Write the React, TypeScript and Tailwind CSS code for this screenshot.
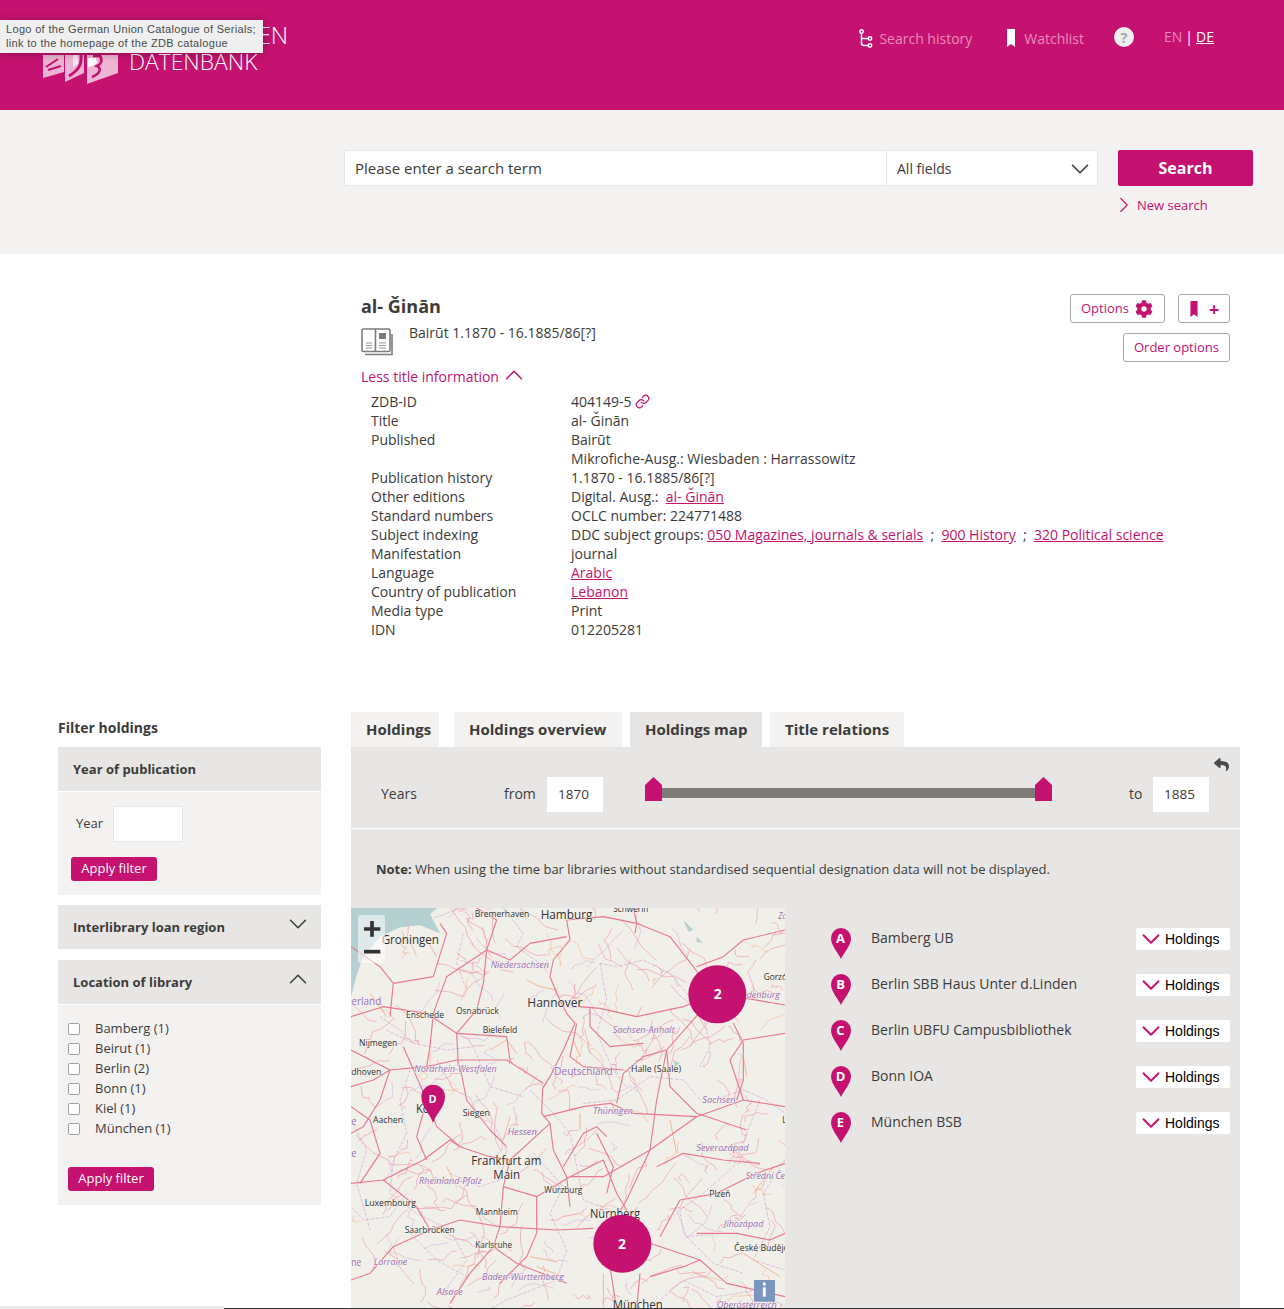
import { ChevronDown, ChevronRight, ChevronUp, Link as LinkIcon } from "lucide-react";
import { FaCog, FaReply } from "react-icons/fa";

const motorways = [
  "M650 60L660 120 610 180 600 230 625 290 650 340 675 370 640 450 600 530 578 565 575 640 600 670 610 750 650 830 660 920",
  "M650 60L760 50 860 70 960 110 1030 200 1060 240",
  "M650 110L540 130 480 180 410 150 400 250 380 330 320 400 325 500",
  "M410 150L440 60 380 24",
  "M690 320L750 325 860 350 1000 320 1100 280 1305 315",
  "M1100 280L950 450 920 600 900 750 830 900 800 950",
  "M3 450L120 510 230 500 320 480 470 480 580 550",
  "M3 350L100 320 230 340 320 400 470 410 480 480",
  "M230 500L240 440 250 340 290 230 410 150",
  "M120 510L90 600 40 680 3 700",
  "M230 600L260 680 330 740 420 770 480 780 600 670",
  "M330 500L350 600 420 690 470 740",
  "M480 780L460 860 450 980 430 1040 500 1090 650 1150",
  "M460 860L560 890 660 830 760 780 800 880 830 930",
  "M660 830L760 830 900 750 1040 650 1180 600 1305 620",
  "M580 650L700 620 780 610 850 640 1040 650",
  "M800 610L820 520 880 470 950 450",
  "M3 850L100 840 220 780 300 720 330 740",
  "M100 840L200 920 240 990 330 960 450 980 620 990 730 985",
  "M240 990L130 1040 60 1120 3 1140",
  "M430 1040L360 1120 300 1210",
  "M800 1000L780 1100 800 1227",
  "M900 1030L1050 1080 1130 1150 1305 1190",
  "M870 1120L860 1227",
  "M900 1130L1000 1100 1050 1080",
  "M930 1010L990 900 1100 880 1220 820 1305 790",
  "M1180 600L1140 480 1180 420 1305 400",
  "M1150 370L1180 430 1180 540 1160 600",
  "M950 450L960 560 1040 640 1190 690",
  "M860 70L850 24M860 70L855 100",
  "M1040 200L1120 170 1180 120 1305 90",
  "M720 320L720 380 780 440 880 430",
  "M680 370L660 470 700 500 820 510",
  "M3 140L90 200 130 250 120 350",
  "M130 250L250 230M250 230L290 100 270 70",
  "M740 700L790 800 770 880",
  "M640 800L700 700 740 680 770 710",
  "M560 890L560 1000 530 1070 450 1150",
  "M3 560L70 540 120 510",
  "M160 440L230 600 200 710 230 780",
  "M3 620L60 660 90 760 30 850",
  "M920 800L1000 760 1120 780 1230 790",
  "M1040 1000L1160 1000 1260 1020 1305 1000",
];

const orangeRoads = [
  "M530 240L570 260 620 270",
  "M320 160L350 180",
  "M420 450L470 420 500 460",
  "M690 640L690 690",
  "M540 1070L620 1085",
  "M560 1100L640 1130",
  "M760 1120L760 1210",
  "M1210 880L1270 800",
  "M1180 1060L1290 1130",
  "M670 420L690 470",
  "M480 650L460 720",
  "M780 600L800 640",
  "M960 660L980 760",
  "M60 280L110 350",
  "M290 800L320 860",
  "M1180 470L1190 530",
  "M860 350L875 320",
  "M230 120L260 170",
];

const borders = [
  "M170 880L120 950 40 960 3 920",
  "M180 510L150 600 170 700 130 780 120 880 200 940 300 990 350 1080 280 1180",
  "M350 640L430 670 470 750 450 840 390 860 300 820",
  "M540 570L610 640 660 700 700 900 780 930",
  "M750 190L800 200 880 180 960 220 1010 280 1060 350 1080 440 1050 500",
  "M750 190L770 300 740 400 790 510 830 560",
  "M700 610L800 600 900 530 1000 540 1060 610 1180 570 1250 600 1305 640",
  "M1230 600L1190 700 1150 800 1060 880 990 930 1000 1000 1090 1090 1180 1120",
  "M1305 780L1240 880 1260 980 1210 1080 1305 1110",
  "M110 390L190 430 290 450 370 440 420 560 520 590",
  "M3 660L50 750 20 850 60 990",
  "M550 760L640 860 600 940 650 1050 620 1140 470 1200 420 1227",
  "M180 1000L260 1080 350 1130",
  "M900 1227L1000 1140 1100 1190 1220 1170 1305 1220",
  "M460 24L520 100 500 140 570 190",
  "M340 100L320 190 350 270",
  "M90 350L150 390 190 430",
  "M1120 1000L1010 1010 980 930",
];

// small roads all over the map, only there as texture
function minorRoads(count: number, seed: number, reach: number) {
  let s = seed;
  const next = (n: number) => {
    s = (s * 1103515245 + 12345) % 2147483648;
    return (s / 2147483648) * n;
  };
  const out: string[] = [];
  for (let i = 0; i < count; i++) {
    let x = next(1302) + 3;
    let y = next(1203) + 24;
    if (x + y < 300) continue;
    let d = `M${x.toFixed(0)} ${y.toFixed(0)}`;
    const dirX = next(2) - 1;
    const dirY = next(2) - 1;
    for (let j = 0; j < 5; j++) {
      x += dirX * reach + next(30) - 15;
      y += dirY * reach + next(30) - 15;
      d += `L${x.toFixed(0)} ${y.toFixed(0)}`;
    }
    out.push(d);
  }
  return out;
}

const pinkTexture = minorRoads(190, 11, 24);
const orangeTexture = minorRoads(40, 77, 18);
const purpleTexture = minorRoads(60, 205, 20);

const mapLabels: [string, number, number, number, number, string][] = [
  ["Bremerhaven", 374, 52, 28, 164, "city"],
  ["Hamburg", 572, 56, 38, 155, "city"],
  ["Schwerin", 790, 35, 28, 105, "city"],
  ["Groningen", 95, 132, 37, 172, "city"],
  ["Niedersachsen", 422, 203, 28, 175, "state"],
  ["erland", 4, 314, 31, 90, "country"],
  ["Gorzó", 1241, 240, 28, 70, "city"],
  ["denburg", 1190, 295, 28, 100, "state"],
  ["Za", 1285, 58, 28, 26, "state"],
  ["Hannover", 532, 322, 37, 165, "city"],
  ["Enschede", 168, 353, 28, 114, "city"],
  ["Osnabrück", 318, 343, 28, 128, "city"],
  ["Bielefeld", 398, 400, 28, 104, "city"],
  ["Sachsen-Anhalt", 788, 398, 28, 186, "state"],
  ["Nijmegen", 27, 437, 28, 115, "city"],
  ["dhoven", 4, 526, 28, 90, "city"],
  ["Nordrhein-Westfalen", 193, 515, 28, 247, "state"],
  ["Deutschland", 613, 526, 32, 175, "country"],
  ["Halle (Saale)", 843, 516, 28, 150, "city"],
  ["Köln", 198, 640, 37, 70, "city"],
  ["Sachsen", 1057, 610, 28, 100, "state"],
  ["Siegen", 338, 648, 28, 82, "city"],
  ["Aachen", 69, 670, 28, 90, "city"],
  ["e", 4, 676, 31, 16, "country"],
  ["Thüringen", 729, 643, 28, 120, "state"],
  ["Hessen", 473, 706, 28, 88, "state"],
  ["L", 1297, 670, 28, 12, "city"],
  ["Severozápad", 1039, 752, 28, 157, "state"],
  ["e", 4, 772, 31, 16, "country"],
  ["Frankfurt am", 364, 796, 37, 210, "city"],
  ["Main", 430, 838, 37, 80, "city"],
  ["Rheinland-Pfalz", 207, 853, 28, 188, "state"],
  ["Střední Če", 1187, 836, 28, 118, "state"],
  ["Würzburg", 583, 880, 28, 114, "city"],
  ["Plzeň", 1078, 890, 28, 63, "city"],
  ["Luxembourg", 44, 918, 28, 154, "city"],
  ["Mannheim", 377, 944, 28, 126, "city"],
  ["Nürnberg", 720, 955, 37, 150, "city"],
  ["Saarbrücken", 164, 998, 28, 150, "city"],
  ["Jihozápad", 1122, 980, 28, 118, "state"],
  ["Karlsruhe", 376, 1043, 28, 110, "city"],
  ["České Budějovice", 1153, 1052, 28, 210, "city"],
  ["ne", 4, 1098, 31, 30, "country"],
  ["Lorraine", 72, 1094, 28, 100, "state"],
  ["Baden-Württemberg", 396, 1140, 28, 245, "state"],
  ["Alsace", 260, 1184, 28, 78, "state"],
  ["München", 788, 1226, 37, 150, "city"],
  ["Oberösterreich", 1100, 1224, 28, 180, "state"],
];

const info: [string, React.ReactNode][] = [
  ["ZDB-ID", <span className="flex items-center gap-[3px]">404149-5 <LinkIcon size={15} className="text-[#c5116f]" /></span>],
  ["Title", "al- Ǧinān"],
  ["Published", "Bairūt"],
  ["", "Mikrofiche-Ausg.: Wiesbaden : Harrassowitz"],
  ["Publication history", "1.1870 - 16.1885/86[?]"],
  ["Other editions", <>Digital. Ausg.:&nbsp; <a className="text-[#c5116f] underline">al- Ǧinān</a></>],
  ["Standard numbers", "OCLC number: 224771488"],
  ["Subject indexing", <>DDC subject groups: <a className="text-[#c5116f] underline">050 Magazines, journals &amp; serials</a>&nbsp; ;&nbsp; <a className="text-[#c5116f] underline">900 History</a>&nbsp; ;&nbsp; <a className="text-[#c5116f] underline">320 Political science</a></>],
  ["Manifestation", "journal"],
  ["Language", <a className="text-[#c5116f] underline">Arabic</a>],
  ["Country of publication", <a className="text-[#c5116f] underline">Lebanon</a>],
  ["Media type", "Print"],
  ["IDN", "012205281"],
];

const libraries = [
  ["A", "Bamberg UB"],
  ["B", "Berlin SBB Haus Unter d.Linden"],
  ["C", "Berlin UBFU Campusbibliothek"],
  ["D", "Bonn IOA"],
  ["E", "München BSB"],
];

const locations = ["Bamberg (1)", "Beirut (1)", "Berlin (2)", "Bonn (1)", "Kiel (1)", "München (1)"];

function Pin({ letter }: { letter: string }) {
  return (
    <svg width="20" height="31" viewBox="0 0 20 31" className="shrink-0">
      <path d="M10 31C7 24 0 18 0 10A10 10 0 0 1 20 10C20 18 13 24 10 31Z" fill="#c5116f" />
      <text x="9.5" y="14.5" textAnchor="middle" fontSize="13" fontWeight="700" fill="#fff" fontFamily="Open Sans, sans-serif">
        {letter}
      </text>
    </svg>
  );
}

function Bookmark({ className }: { className: string }) {
  return (
    <svg width="8" height="18" viewBox="0 0 8 18" fill="currentColor" className={className}>
      <path d="M0 0H8V18L4 15 0 18Z" />
    </svg>
  );
}

function Logo() {
  return (
    <div className="flex items-end gap-[11px]">
      <svg width="75" height="30" viewBox="0 0 75 30" className="mb-[-5px] overflow-visible">
        <path d="M0 0H21V17L0 23Z" fill="#eeb4d3" />
        <path d="M22 0H41V18L22 27Z" fill="#eeb4d3" />
        <path d="M44 0H75V18L44 29Z" fill="#eeb4d3" />
        <path d="M3 12L15 4M5 15L18 11" stroke="#c5116f" strokeWidth="2" fill="none" />
        <path d="M30 0H35V9L30 12Z" fill="#f9e6f0" />
        <path d="M38 0C39 9 36 15 26 21" stroke="#c5116f" strokeWidth="3" fill="none" />
        <path d="M45 3H53L54 8 50 11 45 12Z" fill="#fff" />
        <path d="M50 1H57C60 6 58 9 54 11C59 13 57 19 49 22" stroke="#c5116f" strokeWidth="2.6" fill="none" />
      </svg>
      <span className="text-[22.8px] leading-[30px] font-light text-white relative top-[-3px]">DATENBANK</span>
    </div>
  );
}

function Header() {
  return (
    <header className="relative h-[110px] bg-[#c5116f] flex justify-between text-white">
      <div className="pl-[43px] pt-[17px]">
        <div className="text-[24px] leading-[36px] font-light text-right w-[245px] mb-[-3px]">ZEITSCHRIFTEN</div>
        <Logo />
      </div>
      <nav className="flex items-start pt-[26px] pr-[70px] text-sm">
        <svg width="14" height="20" viewBox="0 0 14 20" className="mt-[3px] mr-[6px]" fill="none" stroke="#fff" strokeWidth="1.5">
          <circle cx="2.5" cy="2.5" r="1.7" />
          <circle cx="11" cy="9.5" r="1.7" />
          <circle cx="11" cy="16.5" r="1.7" />
          <path d="M2.5 4.5V14C2.5 16 3.5 16.5 5 16.5H9M2.5 9.5H9" />
        </svg>
        <span className="text-[#e78cbc] leading-[26px] mr-[35px]">Search history</span>
        <Bookmark className="mt-[3px] mr-[9px] text-white" />
        <span className="text-[#e78cbc] leading-[26px] mr-[30px]">Watchlist</span>
        <span className="w-5 h-5 mt-[1px] mr-[30px] rounded-full bg-[#f0eff0] text-[#a9a9ad] font-bold text-[15px] leading-5 text-center">?</span>
        <span className="leading-[22px] text-[#e78cbc]">EN</span>
        <span className="leading-[22px] mx-[3px]">|</span>
        <span className="leading-[22px] underline">DE</span>
      </nav>
      <div className="absolute left-0 top-[20px] w-[263px] h-[33px] bg-[#efefef] shadow-[0_1px_8px_rgba(0,0,0,0.3)] px-[6px] pt-[2px] text-[11px] leading-[14px] text-[#4a4a4a] font-['Liberation_Sans',sans-serif] tracking-[0.33px] whitespace-nowrap">
        Logo of the German Union Catalogue of Serials;
        <br />
        link to the homepage of the ZDB catalogue
      </div>
    </header>
  );
}

function SearchBand() {
  return (
    <section className="h-[144px] bg-[#f3f2f1] pl-[344px] pt-[40px] flex items-start">
      <div className="flex w-[754px] h-[36px] bg-white border border-[#e7e6e4] text-[15px] leading-[34px]">
        <div className="w-[541px] pl-[10px]">Please enter a search term</div>
        <div className="flex-1 border-l border-[#e7e6e4] pl-[10px] pr-[2px] flex items-center justify-between text-sm pt-[1px]">
          All fields
          <ChevronDown size={30} className="text-[#3c3b3a]" strokeWidth={1.3} />
        </div>
      </div>
      <div className="ml-[20px]">
        <button className="w-[135px] h-[36px] bg-[#c5116f] rounded-[2px] text-white font-bold text-base">Search</button>
        <div className="flex items-center ml-[-7px] mt-[10px] text-[13px] leading-[18px] text-[#c5116f]">
          <ChevronRight size={26} strokeWidth={1} className="my-[-4px]" />
          New search
        </div>
      </div>
    </section>
  );
}

function TitleSection() {
  return (
    <section className="h-[458px] pl-[361px] pr-[54px] pt-[40px] flex">
      <div className="w-0 grow">
        <h1 className="text-lg leading-[26px] font-bold mt-[-1px]">al- Ǧinān</h1>
        <div className="flex mt-[6px]">
          <svg width="32" height="28" viewBox="0 0 32 28" fill="none" className="mt-[3px]">
            <rect x="1" y="1" width="28" height="22.5" rx="1.5" fill="#fff" stroke="#7f7a78" strokeWidth="1.6" />
            <path d="M14.5 1V23M31 6V26.5H4" stroke="#7f7a78" strokeWidth="1.6" />
            <rect x="18" y="5" width="7" height="6" fill="#7f7a78" />
            <path d="M5 15H11M5 17.5H11M5 20H11M18 15H25M18 17.5H25M18 20H25" stroke="#7f7a78" strokeWidth="0.8" />
          </svg>
          <div className="ml-[16px] text-sm leading-[20px] mt-[-2px]">Bairūt 1.1870 - 16.1885/86[?]</div>
        </div>
        <div className="flex items-start h-[20px] mt-[11px] text-sm leading-[20px] text-[#c5116f]">
          Less title information
          <ChevronUp size={30} strokeWidth={1.2} className="mt-[-7px]" />
        </div>
        <dl className="grid grid-cols-[200px_1fr] pl-[10px] mt-[5px] text-sm leading-[19px]">
          {info.map(([label, value], i) => (
            <div key={i} className="contents">
              <dt>{label}</dt>
              <dd className="whitespace-nowrap">{value}</dd>
            </div>
          ))}
        </dl>
      </div>
      <div className="flex flex-col items-end gap-[10px] text-[13px] text-[#c5116f]">
        <div className="flex gap-[13px]">
          <div className="flex items-center h-[29px] w-[95px] pl-[10px] gap-[6px] border border-[#a9a6a5] rounded-[3px] bg-white">
            Options
            <FaCog size={18} />
          </div>
          <div className="flex items-center h-[29px] w-[52px] pl-[11px] gap-[11px] border border-[#a9a6a5] rounded-[3px] bg-white">
            <Bookmark className="h-[16px]" />
            <span className="font-bold text-lg leading-none">+</span>
          </div>
        </div>
        <div className="flex items-center justify-center h-[29px] w-[107px] border border-[#a9a6a5] rounded-[3px] bg-white">
          Order options
        </div>
      </div>
    </section>
  );
}

function ApplyButton() {
  return <button className="block w-[86px] h-[24px] bg-[#c5116f] rounded-[3px] text-white text-[13px]">Apply filter</button>;
}

function FilterHead({ title, icon }: { title: string; icon?: React.ReactNode }) {
  return (
    <div className="h-[44px] bg-[#e7e6e4] pl-[15px] pr-[8px] pt-[1px] flex justify-between items-center text-[13px] font-bold">
      {title}
      {icon}
    </div>
  );
}

function Filters() {
  return (
    <aside className="w-[263px] ml-[58px]">
      <h2 className="text-sm font-bold leading-[20px] pt-[6px] h-[35px]">Filter holdings</h2>
      <FilterHead title="Year of publication" />
      <div className="mt-[1px] h-[103px] bg-[#f3f2f1] pl-[13px] pt-[14px]">
        <div className="flex items-center pl-[5px] text-[13px] gap-[10px]">
          Year
          <div className="w-[70px] h-[36px] bg-white border border-[#e7e6e4]" />
        </div>
        <div className="mt-[15px]">
          <ApplyButton />
        </div>
      </div>
      <div className="mt-[10px]">
        <FilterHead title="Interlibrary loan region" icon={<ChevronDown size={30} strokeWidth={1.2} className="mb-[-8px] mt-[-16px]" />} />
      </div>
      <div className="mt-[11px]">
        <FilterHead title="Location of library" icon={<ChevronUp size={30} strokeWidth={1.2} className="mb-[-8px] mt-[-16px]" />} />
      </div>
      <div className="mt-[1px] h-[200px] bg-[#f3f2f1] pl-[10px] pt-[14px]">
        {locations.map((l) => (
          <div key={l} className="flex items-center h-[20px] text-[13px]">
            <span className="w-[12px] h-[12px] border border-[#a0a0a0] rounded-[2px] bg-white mr-[15px]" />
            {l}
          </div>
        ))}
        <div className="mt-[28px]">
          <ApplyButton />
        </div>
      </div>
    </aside>
  );
}

function Tabs() {
  return (
    <div className="flex h-[35px] text-[15px] font-bold">
      <div className="w-[88px] bg-[#f3f2f1] flex items-center pl-[15px]">Holdings</div>
      <div className="w-[168px] ml-[15px] bg-[#f3f2f1] flex items-center pl-[15px]">Holdings overview</div>
      <div className="w-[132px] ml-[8px] bg-[#e7e6e4] flex items-center pl-[15px]">Holdings map</div>
      <div className="w-[134px] ml-[8px] bg-[#f3f2f1] flex items-center pl-[15px]">Title relations</div>
    </div>
  );
}

function Thumb({ className }: { className: string }) {
  return (
    <svg width="17" height="24" viewBox="0 0 17 24" className={"absolute top-[-11px] " + className}>
      <path d="M0 8L8.5 0 17 8V24H0Z" fill="#c5116f" />
    </svg>
  );
}

function YearSlider() {
  return (
    <div className="relative h-[82px] pt-[14px] border-b border-white flex items-center pl-[30px] text-sm">
      <span className="w-[123px] mt-[-2px]">Years</span>
      <span className="w-[43px] mt-[-2px]">from</span>
      <div className="w-[56px] h-[35px] bg-white leading-[35px] pl-[11px] text-[13.5px]">1870</div>
      <div className="relative w-[406px] h-[10px] ml-[43px] mb-[4px] bg-[#7f7a78]">
        <Thumb className="left-[-1px]" />
        <Thumb className="right-0" />
      </div>
      <span className="ml-[77px] w-[24px] mt-[-2px]">to</span>
      <div className="w-[56px] h-[35px] bg-white leading-[35px] pl-[11px] text-[13.5px]">1885</div>
      <FaReply size={15} className="absolute right-[11px] top-[10px] text-[#4a4a4a]" />
    </div>
  );
}

function HoldingsMap() {
  return (
    <div className="relative w-[434px] h-[401px] shrink-0 overflow-hidden bg-[#f1efe9]">
      <svg width="434" height="401" viewBox="3 24 1302 1203" className="block">
        <path d="M3 24H262L240 42 270 100 210 76 150 82 90 110 40 170 20 225 3 290Z" fill="#b5d0d0" />
        <path d="M1000 60L1030 90 1015 95ZM1040 110L1060 130 1040 125ZM970 480L990 490 975 500Z" fill="#b5d0d0" />
        <g fill="none" strokeLinejoin="round">
          {purpleTexture.map((d) => (
            <path key={d} d={d} stroke="#dcbde0" strokeWidth="2.2" />
          ))}
          {borders.map((d) => (
            <path key={d} d={d} stroke="#cfa6d6" strokeWidth="2.4" strokeDasharray="7 3 2 3" />
          ))}
          {orangeTexture.map((d) => (
            <path key={d} d={d} stroke="#f6bd9c" strokeWidth="2" />
          ))}
          {orangeRoads.map((d) => (
            <path key={d} d={d} stroke="#f4a77c" strokeWidth="2.4" />
          ))}
          {pinkTexture.map((d) => (
            <path key={d} d={d} stroke="#eda3b1" strokeWidth="2.2" />
          ))}
          {motorways.map((d) => (
            <path key={d} d={d} stroke="#e8798f" strokeWidth="3.4" />
          ))}
        </g>
        <g fontFamily="Open Sans, sans-serif" paintOrder="stroke" stroke="#f4f3ee" strokeWidth="3">
          {mapLabels.map(([text, x, y, size, width, kind]) => (
            <text
              key={text + y}
              x={x}
              y={y}
              fontSize={size}
              textLength={width}
              lengthAdjust="spacingAndGlyphs"
              fill={kind === "city" ? "#303030" : "#9a6fb0"}
              fontStyle={kind === "state" ? "italic" : "normal"}
            >
              {text}
            </text>
          ))}
        </g>
        <circle cx="1102" cy="283" r="87" fill="#c5116f" />
        <circle cx="817" cy="1031" r="87" fill="#c5116f" />
        <g fontFamily="Open Sans, sans-serif" fontWeight="700" fontSize="42" fill="#fff" textAnchor="middle">
          <text x="1103" y="298">2</text>
          <text x="816" y="1046">2</text>
        </g>
        <path d="M249 668C240 640 214 622 214 590A35 35 0 0 1 285 590C285 622 258 640 249 668Z" fill="#c5116f" />
        <text x="248" y="610" fontFamily="Open Sans, sans-serif" fontWeight="700" fontSize="33" fill="#fff" textAnchor="middle">D</text>
        <rect x="24" y="45" width="81" height="145" rx="10" fill="#fff" fillOpacity="0.55" />
        <path d="M42 87H91M66 63V110" stroke="#333" strokeWidth="11" />
        <path d="M42 155H91" stroke="#333" strokeWidth="11" />
        <rect x="1212" y="1140" width="63" height="65" rx="3" fill="#7a96bf" />
        <path d="M1243 1162V1190" stroke="#fff" strokeWidth="9" />
        <circle cx="1243" cy="1152" r="5" fill="#fff" />
      </svg>
    </div>
  );
}

function LibraryList() {
  return (
    <ul className="ml-[46px] w-[399px] pt-[20px]">
      {libraries.map(([letter, name]) => (
        <li key={letter} className="flex items-start h-[46px]">
          <Pin letter={letter} />
          <span className="ml-[20px] text-sm leading-[20px]">{name}</span>
          <div className="ml-auto flex items-center w-[94px] h-[22px] bg-white rounded-[2px] font-['Liberation_Sans',sans-serif] text-sm text-black">
            <ChevronDown size={30} strokeWidth={1.5} className="text-[#c5116f] mr-[-1px] my-[-4px] shrink-0" />
            Holdings
          </div>
        </li>
      ))}
    </ul>
  );
}

function HoldingsPanel() {
  return (
    <main className="ml-[30px] w-[889px]">
      <Tabs />
      <div className="bg-[#e7e6e4] h-[562px]">
        <YearSlider />
        <p className="text-[13px] leading-[20px] pl-[25px] pt-[30px] h-[79px]">
          <b>Note:</b> When using the time bar libraries without standardised sequential designation data will not be displayed.
        </p>
        <div className="flex">
          <HoldingsMap />
          <LibraryList />
        </div>
      </div>
    </main>
  );
}

export default function App() {
  return (
    <div className="relative h-[1309px] w-[1284px] overflow-hidden bg-white text-[#3c3b3a] font-['Open_Sans',sans-serif]">
      <Header />
      <SearchBand />
      <TitleSection />
      <div className="flex">
        <Filters />
        <HoldingsPanel />
      </div>
      <div className="absolute left-0 bottom-0 w-[224px] h-[3px] bg-[#e8e8e8]" />
      <div className="absolute left-[224px] right-0 bottom-0 h-px bg-[#333]" />
    </div>
  );
}
